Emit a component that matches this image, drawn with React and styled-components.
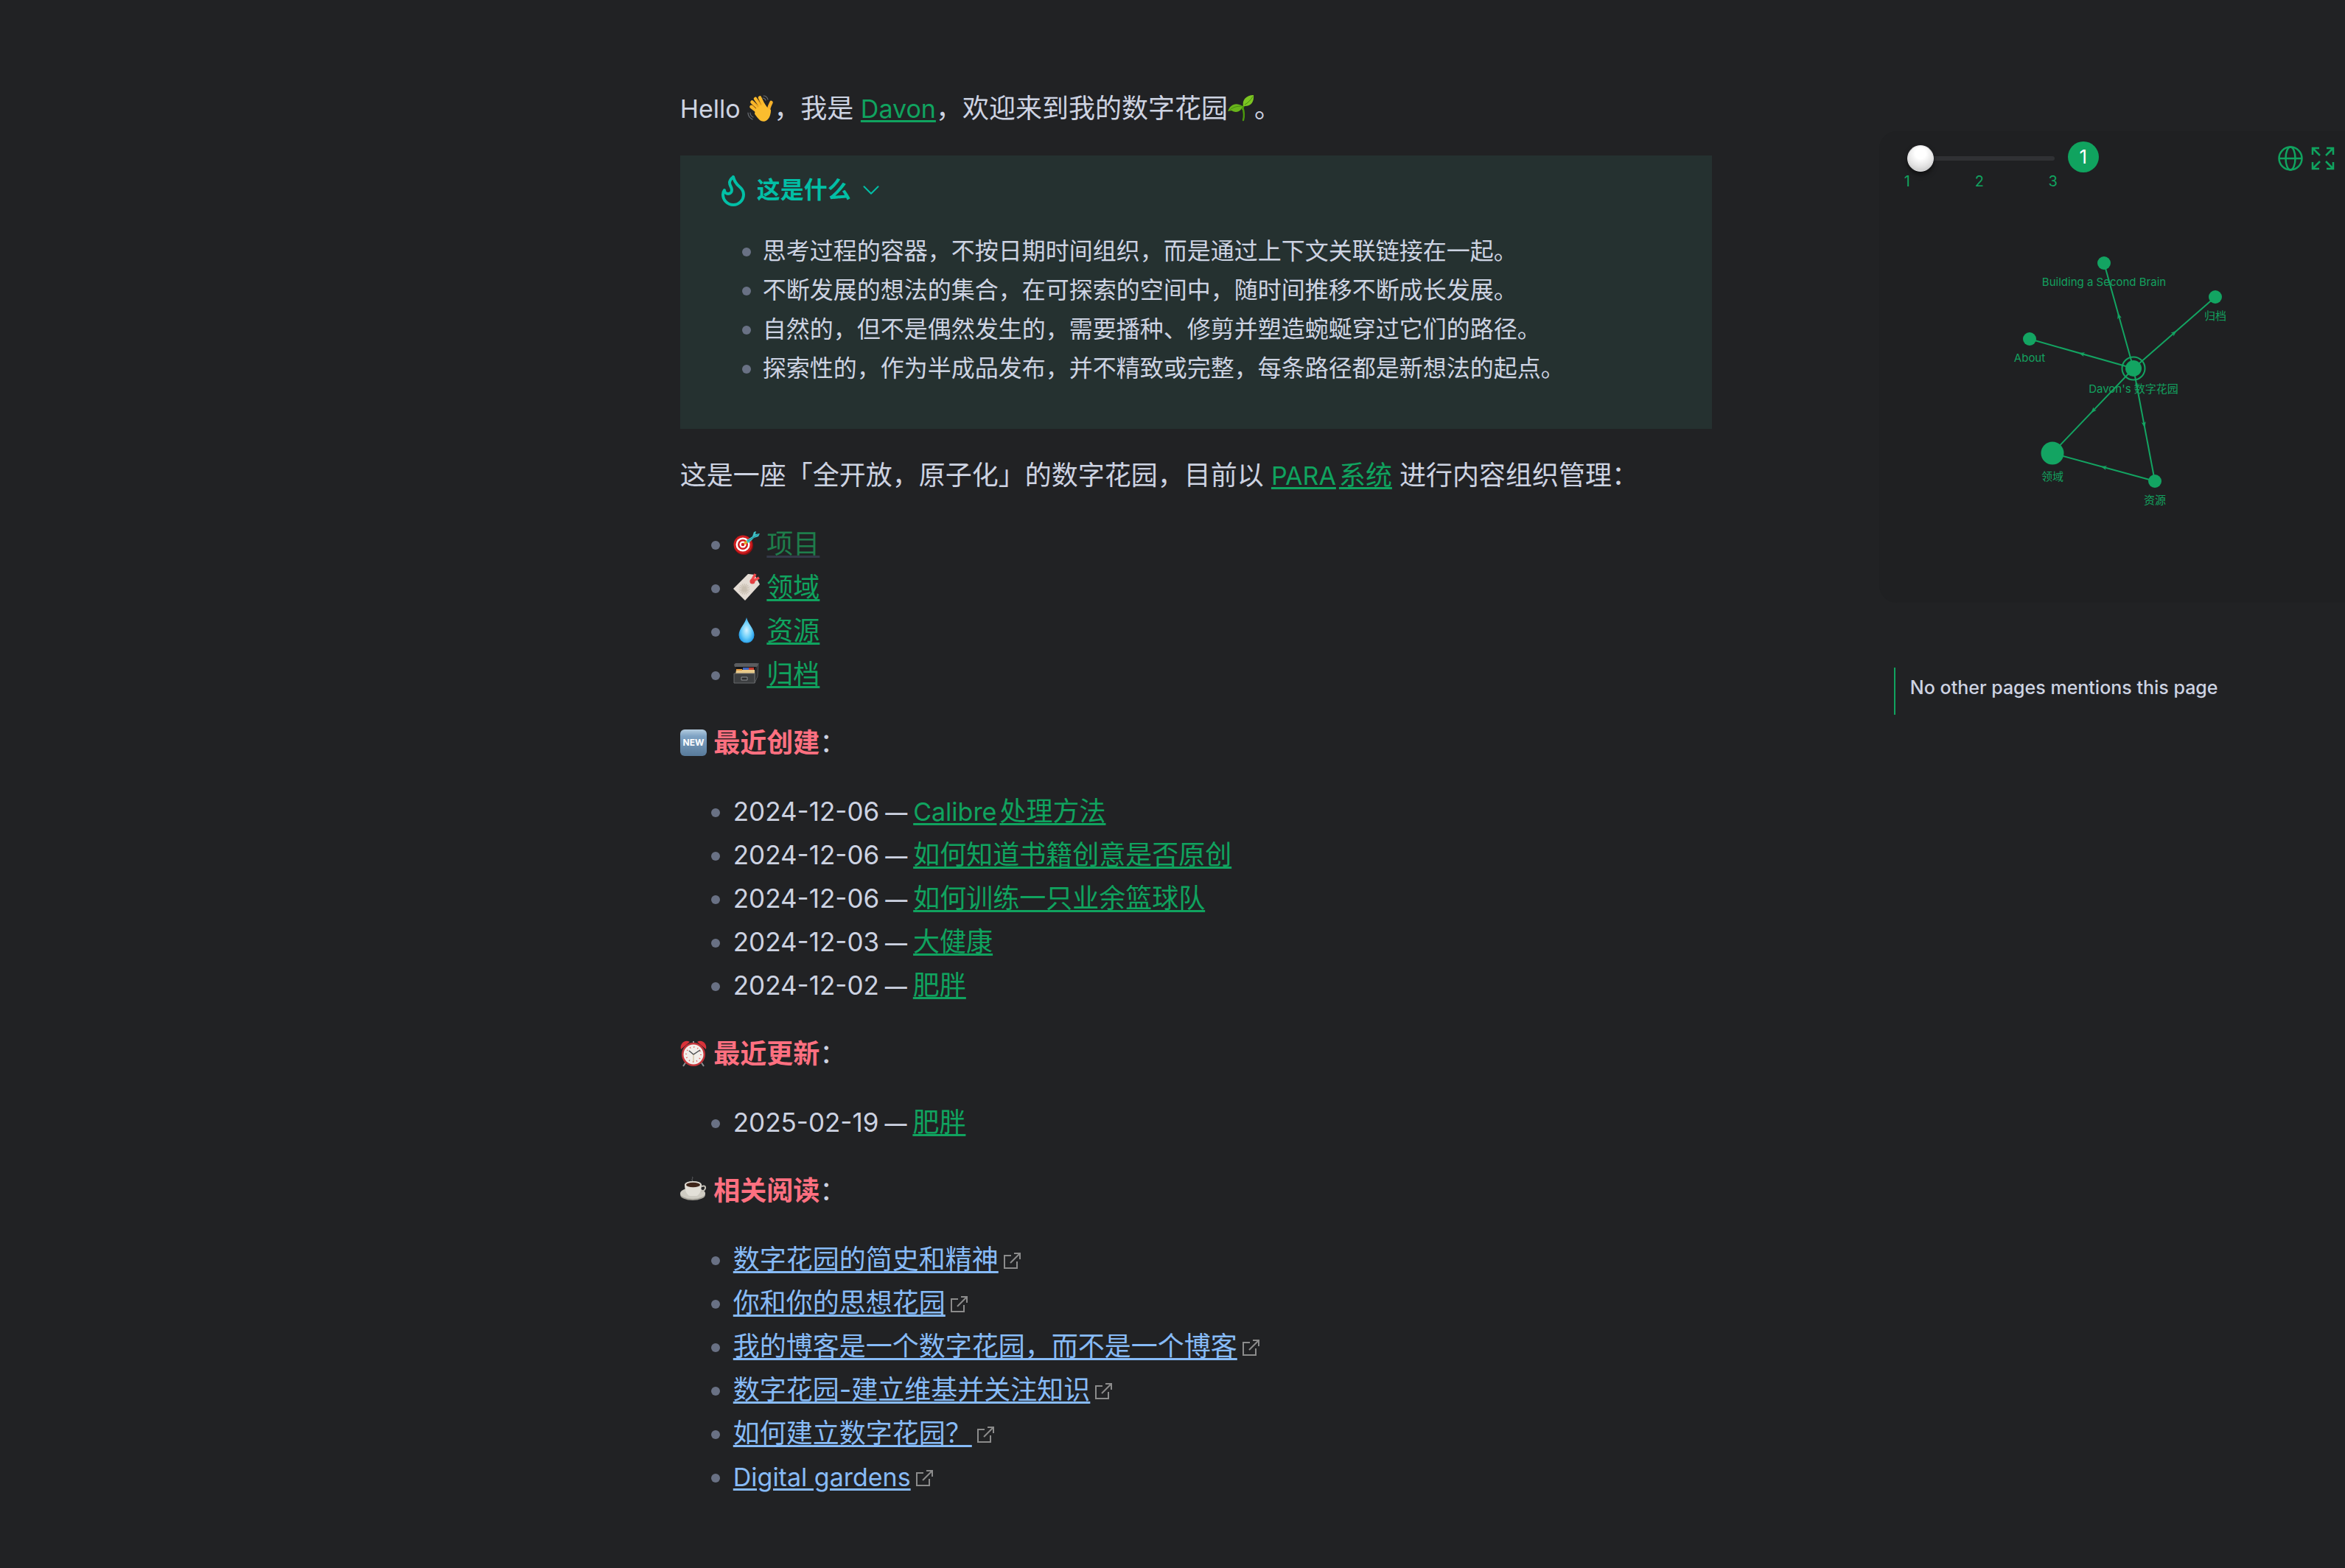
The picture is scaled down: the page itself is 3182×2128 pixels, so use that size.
import React, { useState } from 'react';
import styled, { createGlobalStyle } from 'styled-components';
import { ChevronDown, Flame } from 'lucide-react';

const GlobalStyle = createGlobalStyle`
  body {
    background: #212224;
    color: #cdd3e2;
    font-family: Inter, "Noto Sans CJK SC", sans-serif;
    margin: 0;
  }
`;

const Page = styled.div`
  display: grid;
  grid-template-columns: 29fr 44fr 27fr;
  min-height: 100vh;
  overflow: hidden;
`;

const Article = styled.main`
  display: flex;
  flex-direction: column;
  font-size: 36px;
  gap: 34px;
  grid-column: 2;
  line-height: 59px;
  min-width: 0;
  padding: 118px 0 90px;
`;

const Paragraph = styled.p`
  margin: 0;
`;

const SectionTitle = styled.strong`
  color: #ff7080;
  font-weight: 700;
`;

const Latin = styled.span`
  font-size: 34px;
  line-height: 1;
`;

const NoteDate = styled.time`
  font-size: 35px;
  line-height: 1;
`;

const Dash = styled.span`
  font-size: 30px;
  font-weight: 500;
  line-height: 1;
`;

const Link = styled.a`
  color: ${({ $external }) => ($external ? '#87bbf7' : '#10a35f')};
  text-decoration: underline;
  text-decoration-thickness: 3px;
  text-underline-offset: 3px;

  ${Latin} + span {
    margin-left: 4px;
  }
`;

const UnresolvedLink = styled(Link)`
  color: #1e7d4b;
  text-decoration-color: #343848;
`;

const BulletList = styled.ul`
  list-style: none;
  margin: 0;
  padding: 0 0 0 42px;
`;

const BulletItem = styled.li`
  align-items: center;
  display: flex;
  gap: 18px;

  &::before {
    background: #697184;
    border-radius: 50%;
    content: '';
    flex: none;
    height: 12px;
    margin-top: 2px;
    width: 12px;
  }
`;

const Callout = styled.section`
  background: #253130;
  font-size: 32px;
  line-height: 53px;
  padding: 20px 48px 56px;
`;

const CalloutTitle = styled.button`
  align-items: center;
  background: none;
  border: 0;
  color: #02bfa6;
  cursor: pointer;
  display: flex;
  font: inherit;
  font-weight: 700;
  gap: 8px;
  margin-bottom: 30px;
  padding: 0;
`;

const CalloutList = styled(BulletList)`
  padding-left: 36px;

  ${BulletItem} {
    gap: 16px;
  }
`;

const EmojiSvg = styled.svg`
  display: inline-block;
  height: 36px;
  overflow: visible;
  vertical-align: -5px;
  width: 36px;
`;

const ExternalSvg = styled.svg`
  fill: none;
  height: 22px;
  margin-left: 7px;
  stroke: #8b8b8b;
  stroke-width: 2;
  width: 23px;
`;

const Sidebar = styled.aside`
  display: flex;
  flex-direction: column;
  gap: 88px;
  grid-column: 3;
  min-width: 0;
  padding: 178px 0 0 227px;
`;

const GraphPanel = styled.section`
  background: #1f2022;
  border-radius: 24px 0 0 24px;
  height: 640px;
`;

const GraphToolbar = styled.div`
  align-items: flex-start;
  box-sizing: border-box;
  color: #10a35f;
  display: flex;
  height: 82px;
  padding: 14px 13px 0 38px;
`;

const DepthControl = styled.div`
  padding-top: 5px;
  width: 200px;
`;

const DepthSlider = styled.input`
  appearance: none;
  background: transparent;
  display: block;
  height: 36px;
  margin: 0;
  width: 100%;

  &::-webkit-slider-runnable-track {
    background: #303134;
    border-radius: 3px;
    height: 6px;
  }

  &::-webkit-slider-thumb {
    appearance: none;
    background: radial-gradient(circle at 50% 30%, #ffffff 25%, #e4e4e4 60%, #c9c9c9 85%);
    border: 1px solid #e2e2e4;
    border-radius: 50%;
    box-shadow: 0 4px 6px rgba(0, 0, 0, .5);
    box-sizing: border-box;
    height: 36px;
    margin-top: -15px;
    width: 36px;
  }
`;

const DepthMarks = styled.div`
  display: flex;
  font-size: 20px;
  justify-content: space-between;
  line-height: 26px;
  margin: 0 -4px;
`;

const DepthBadge = styled.output`
  background: #10a35f;
  border-radius: 50%;
  color: #ffffff;
  font-size: 26px;
  height: 42px;
  line-height: 42px;
  margin-left: 18px;
  text-align: center;
  width: 42px;
`;

const GraphActions = styled.div`
  display: flex;
  gap: 10px;
  margin-left: auto;
  padding-top: 6px;
`;

const IconButton = styled.button`
  background: none;
  border: 0;
  color: inherit;
  cursor: pointer;
  display: block;
  height: 34px;
  padding: 0;
  width: 34px;

  svg {
    display: block;
    fill: none;
    height: 34px;
    stroke: currentColor;
    stroke-width: 2.500;
    width: 34px;
  }
`;

const GraphSvg = styled.svg`
  display: block;
  height: 558px;
  width: 100%;

  circle, polygon {
    fill: #13a462;
  }

  line {
    stroke: #13a462;
    stroke-width: 2;
  }

  text {
    fill: #13a05f;
    font-size: 15px;
    text-anchor: middle;
  }
`;

const FocusRing = styled.circle`
  && {
    fill: none;
    stroke: #13a462;
    stroke-width: 2;
  }
`;

const Backlinks = styled.p`
  border-left: 2px solid #10a35f;
  box-sizing: border-box;
  font-size: 25px;
  font-weight: 450;
  height: 64px;
  line-height: 54px;
  margin: 0 0 0 20px;
  padding-left: 20px;
`;

const Wave = () => (
  <EmojiSvg viewBox="0 0 36 36" aria-label="wave">
    <g fill="none" strokeLinecap="round">
      <g stroke="#f9b82a" strokeWidth="4.600">
        <path d="M20 22L6.500 9.500" />
        <path d="M21 19L11 5" />
        <path d="M24 18L17 3.500" />
        <path d="M17 25L5.500 16" />
      </g>
      <path stroke="#f7b12a" strokeWidth="4.600" d="M29 23c-1-4 1-8 3.500-13" />
      <path stroke="#e08f16" strokeWidth="1" d="M9 9l9 11M14 6l8 12M7 14l9 9" />
    </g>
    <path fill="#fbbd2e" d="M11 19L23 11l5 7 4 2c0 8-3 14-8 15.500-6 1.500-10-4-14-10z" />
    <path fill="none" stroke="#666a70" strokeWidth="1.200" strokeLinecap="round" d="M1 24c0 4 2 7 6 9M4 24c0 3 2 5 4 6M22 1c3 0 5 2 6 5M21 4c2 0 3 1 4 3" />
  </EmojiSvg>
);

const Sprout = () => (
  <EmojiSvg viewBox="0 0 36 36" aria-label="seedling">
    <path fill="none" stroke="#4c9a0d" strokeWidth="2.400" strokeLinecap="round" d="M21 34c2-7 1-12-1-18M20 19c1-4 3-7 6-9" />
    <path fill="#69b51b" d="M0 22c3-9 11-13 20-7-2 8-9 10-15 6-2 0-4 1-5 1z" />
    <path fill="#7cc522" d="M35 0c1 10-4 16-14 15-2-8 4-15 14-15z" />
    <path fill="none" stroke="#438a10" d="M3 20c5-4 10-5 16-5M23 13c4-2 8-6 11-11" />
  </EmojiSvg>
);

const Target = () => (
  <EmojiSvg viewBox="0 0 36 36" aria-label="target">
    <ellipse cx="14" cy="20" rx="13" ry="13" fill="#8f0f12" />
    <circle cx="13" cy="19" r="12.500" fill="#cf1d1f" />
    <circle cx="13" cy="19" r="9.500" fill="#ffffff" />
    <circle cx="13" cy="19" r="7" fill="#cf1d1f" />
    <circle cx="13" cy="19" r="4.500" fill="#ffffff" />
    <circle cx="13" cy="19" r="2.300" fill="#cf1d1f" />
    <path stroke="#e5ad25" strokeWidth="3" d="M15 18l5-4" />
    <path fill="#3fc0c6" d="M18 13l8-5 2-6 3-1-1 4 6-1-2 4-6 2-6 6-3 1z" />
    <path stroke="#1f8f9a" d="M20 14L34 5" />
  </EmojiSvg>
);

const Tag = () => (
  <EmojiSvg viewBox="0 0 36 36" aria-label="label">
    <path fill="#e4dcd4" d="M0 20L20 0l9 1 7 13-20 22z" />
    <g stroke="#c9bfb1" strokeWidth="1.200">
      <path d="M15 13v15M7.500 20.500h15M9.700 15.200l10.600 10.600M20.300 15.200L9.700 25.800M12 13.500l6 14M18 13.500l-6 14M8 17.500l14 6M8 23.500l14-6" />
    </g>
    <path fill="none" stroke="#f04a4c" strokeWidth="3.500" d="M25 9l5-9M26 10l9-5" />
    <circle cx="26" cy="10" r="3.500" fill="#e33e40" />
  </EmojiSvg>
);

const Droplet = () => (
  <EmojiSvg viewBox="0 0 36 36" aria-label="droplet">
    <defs>
      <radialGradient id="drop" cx=".5" cy=".5" r=".6">
        <stop offset="0" stopColor="#d5f3ff" />
        <stop offset=".5" stopColor="#6fd0fa" />
        <stop offset="1" stopColor="#0f90e6" />
      </radialGradient>
    </defs>
    <path fill="url(#drop)" d="M18 0c2 9 10.500 15 10.500 24a10.500 10.500 0 0 1-21 0C7.500 15 16 9 18 0z" />
  </EmojiSvg>
);

const FileBox = () => (
  <EmojiSvg viewBox="0 0 36 36" aria-label="file box">
    <path fill="#2c2d2f" stroke="#606265" strokeWidth=".8" d="M29 12l5-9-1 18-4 9z" />
    <path fill="#5b5d60" d="M1 5l2-2h29l2 1-2 4H2z" />
    <path fill="#161617" d="M4 8h27l-2 7H3z" />
    <path fill="#3d63c0" d="M13 9h8v4h-8z" />
    <path fill="#c43a2f" d="M21 9h7v3h-7z" />
    <path fill="#e8c98a" d="M4 12h25v6H3z" />
    <path fill="#e59a3f" d="M4 11h8v2H4z" />
    <path fill="#3c3e40" stroke="#66686b" d="M1 17h28v13H1z" />
    <path fill="#2b2c2e" stroke="#8a8c8f" d="M11 22h8v4h-8z" />
  </EmojiSvg>
);

const NewBadge = () => (
  <EmojiSvg viewBox="0 0 36 36">
    <defs>
      <linearGradient id="badge" x2="0" y2="1">
        <stop offset="0" stopColor="#b5cde0" />
        <stop offset=".25" stopColor="#7fa3c4" />
        <stop offset="1" stopColor="#587a9a" />
      </linearGradient>
    </defs>
    <rect width="36" height="36" rx="6" fill="url(#badge)" />
    <text x="18" y="22" fill="#ffffff" fontSize="12" fontWeight="700" textAnchor="middle">NEW</text>
  </EmojiSvg>
);

const AlarmClock = () => (
  <EmojiSvg viewBox="0 0 36 36" aria-label="alarm clock">
    <path stroke="#8d8f92" strokeWidth="2" d="M8 29l-4 6M28 29l4 6M18 1v4" />
    <path fill="#d8323a" d="M1 12C-1 5 6-2 13 2zM35 12c2-7-5-14-12-10z" />
    <circle cx="18" cy="19" r="16" fill="#c5343a" />
    <circle cx="18" cy="19" r="13.500" fill="#f1eeea" />
    <circle cx="18" cy="19" r="10" fill="none" stroke="#e2544f" strokeWidth="2" strokeDasharray="1 4.236" />
    <path fill="none" stroke="#4d5052" strokeWidth="1.500" d="M12 14l6 5 9-6" />
    <path stroke="#c9b48c" d="M18 19v11" />
  </EmojiSvg>
);

const Coffee = () => (
  <EmojiSvg viewBox="0 0 36 36" aria-label="coffee">
    <ellipse cx="17" cy="23.500" rx="17" ry="7.500" fill="#a5a299" />
    <ellipse cx="17" cy="21.500" rx="17" ry="7.500" fill="#cfccc3" />
    <path fill="none" stroke="#c5c2b9" strokeWidth="2" d="M29 12c7-3 7 6-1 7" />
    <path fill="#e3e0d8" d="M6 9h23c0 9-3 15-7 16h-9C9 24 6 18 6 9z" />
    <ellipse cx="17.500" cy="9.500" rx="11.500" ry="4.500" fill="#dbd8d0" />
    <ellipse cx="17.500" cy="10" rx="9.500" ry="3.300" fill="#3e2418" />
    <path fill="none" stroke="#65676a" d="M17 5c-3-3 2-4-1-6" />
  </EmojiSvg>
);

const ExternalIcon = () => (
  <ExternalSvg viewBox="0 0 23 22" aria-hidden="true">
    <path d="M10 4H1v17h17v-9M14 1h8v8M22 1L9 14" />
  </ExternalSvg>
);

const GlobeIcon = () => (
  <svg viewBox="0 0 34 34" aria-hidden="true">
    <circle cx="17" cy="17" r="15.500" />
    <ellipse cx="17" cy="17" rx="6.500" ry="15.500" />
    <path d="M1.500 17h31" />
  </svg>
);

const ExpandIcon = () => (
  <svg viewBox="0 0 34 34" aria-hidden="true">
    <path d="M3 12V3h9M3 3l10 10M22 3h9v9M31 3L21 13M3 22v9h9M3 31l10-10M31 22v9h-9M31 31L21 21" />
  </svg>
);

const calloutItems = [
  '思考过程的容器，不按日期时间组织，而是通过上下文关联链接在一起。',
  '不断发展的想法的集合，在可探索的空间中，随时间推移不断成长发展。',
  '自然的，但不是偶然发生的，需要播种、修剪并塑造蜿蜒穿过它们的路径。',
  '探索性的，作为半成品发布，并不精致或完整，每条路径都是新想法的起点。',
];

const categories = [
  { icon: <Target />, name: '项目', unresolved: true },
  { icon: <Tag />, name: '领域' },
  { icon: <Droplet />, name: '资源' },
  { icon: <FileBox />, name: '归档' },
];

const created = [
  { date: '2024-12-06', latin: 'Calibre', title: '处理方法' },
  { date: '2024-12-06', title: '如何知道书籍创意是否原创' },
  { date: '2024-12-06', title: '如何训练一只业余篮球队' },
  { date: '2024-12-03', title: '大健康' },
  { date: '2024-12-02', title: '肥胖' },
];

const updated = [{ date: '2025-02-19', title: '肥胖' }];

const readings = [
  { title: '数字花园的简史和精神' },
  { title: '你和你的思想花园' },
  { title: '我的博客是一个数字花园，而不是一个博客' },
  { title: '数字花园-建立维基并关注知识' },
  { title: '如何建立数字花园？' },
  { latin: 'Digital gardens' },
];

const nodes = {
  home: { x: 345, y: 240, r: 11, label: "Davon's 数字花园", dy: 33 },
  brain: { x: 305, y: 97, r: 9, label: 'Building a Second Brain', dy: 31 },
  archive: { x: 456, y: 143, r: 9, label: '归档', dy: 31 },
  about: { x: 204, y: 200, r: 9, label: 'About', dy: 31 },
  areas: { x: 235, y: 355, r: 15.5, label: '领域', dy: 37 },
  resources: { x: 374, y: 393, r: 9, label: '资源', dy: 31 },
};

const edges = [
  ['home', 'brain'],
  ['home', 'archive'],
  ['home', 'about'],
  ['home', 'areas'],
  ['home', 'resources'],
  ['resources', 'areas'],
];

const Edge = ({ from, to }) => {
  const angle = Math.atan2(to.y - from.y, to.x - from.x) * 180 / Math.PI;
  return (
    <g>
      <line x1={from.x} y1={from.y} x2={to.x} y2={to.y} />
      <polygon
        points="4,0 -4,3 -2,0 -4,-3"
        transform={`translate(${(from.x + to.x) / 2} ${(from.y + to.y) / 2}) rotate(${angle})`}
      />
    </g>
  );
};

const Graph = () => (
  <GraphSvg viewBox="0 0 632 558" preserveAspectRatio="xMinYMin meet">
    {Object.values(nodes).map(node => (
      <text key={node.label} x={node.x} y={node.y + node.dy}>{node.label}</text>
    ))}
    {edges.map(([from, to]) => (
      <Edge key={`${from}-${to}`} from={nodes[from]} to={nodes[to]} />
    ))}
    <FocusRing cx={nodes.home.x} cy={nodes.home.y} r="15.500" />
    {Object.values(nodes).map(node => (
      <circle key={node.label} cx={node.x} cy={node.y} r={node.r} />
    ))}
  </GraphSvg>
);

const LinkTitle = ({ latin, title }) => (
  <>
    {latin && <Latin>{latin}</Latin>}
    {title && <span>{title}</span>}
  </>
);

const NoteList = ({ notes }) => (
  <BulletList>
    {notes.map(({ date, latin, title }) => (
      <BulletItem key={date + title}>
        <span>
          <NoteDate>{date}</NoteDate>
          <Dash> — </Dash>
          <Link href="#note"><LinkTitle latin={latin} title={title} /></Link>
        </span>
      </BulletItem>
    ))}
  </BulletList>
);

const App = () => {
  const [depth, setDepth] = useState(1);
  const [open, setOpen] = useState(true);

  return (
    <Page>
      <GlobalStyle />
      <Article>
        <Paragraph>
          <Latin>Hello </Latin><Wave />，我是<Latin> <Link href="#davon">Davon</Link></Latin>，欢迎来到我的数字花园<Sprout />。
        </Paragraph>

        <Callout>
          <CalloutTitle type="button" aria-expanded={open} onClick={() => setOpen(!open)}>
            <Flame size={48} />
            这是什么
            <ChevronDown size={38} strokeWidth={1.3} />
          </CalloutTitle>
          {open && (
            <CalloutList>
              {calloutItems.map(item => (
                <BulletItem key={item}><span>{item}</span></BulletItem>
              ))}
            </CalloutList>
          )}
        </Callout>

        <Paragraph>
          这是一座「全开放，原子化」的数字花园，目前以 <Link href="#para"><LinkTitle latin="PARA" title="系统" /></Link> 进行内容组织管理：
        </Paragraph>
        <BulletList>
          {categories.map(({ icon, name, unresolved }) => (
            <BulletItem key={name}>
              <span>
                {icon}<Latin> </Latin>
                {unresolved
                  ? <UnresolvedLink href="#new">{name}</UnresolvedLink>
                  : <Link href="#category">{name}</Link>}
              </span>
            </BulletItem>
          ))}
        </BulletList>

        <Paragraph><NewBadge /><Latin> </Latin><SectionTitle>最近创建</SectionTitle>：</Paragraph>
        <NoteList notes={created} />

        <Paragraph><AlarmClock /><Latin> </Latin><SectionTitle>最近更新</SectionTitle>：</Paragraph>
        <NoteList notes={updated} />

        <Paragraph><Coffee /><Latin> </Latin><SectionTitle>相关阅读</SectionTitle>：</Paragraph>
        <BulletList>
          {readings.map(({ latin, title }) => (
            <BulletItem key={latin || title}>
              <span>
                <Link $external href="#reading"><LinkTitle latin={latin} title={title} /></Link>
                <ExternalIcon />
              </span>
            </BulletItem>
          ))}
        </BulletList>
      </Article>

      <Sidebar>
        <GraphPanel>
          <GraphToolbar>
            <DepthControl>
              <DepthSlider
                type="range"
                min="1"
                max="3"
                value={depth}
                aria-label="Depth"
                onChange={event => setDepth(Number(event.target.value))}
              />
              <DepthMarks>
                <span>1</span>
                <span>2</span>
                <span>3</span>
              </DepthMarks>
            </DepthControl>
            <DepthBadge>{depth}</DepthBadge>
            <GraphActions>
              <IconButton type="button" aria-label="Global graph"><GlobeIcon /></IconButton>
              <IconButton type="button" aria-label="Expand graph"><ExpandIcon /></IconButton>
            </GraphActions>
          </GraphToolbar>
          <Graph />
        </GraphPanel>
        <Backlinks>No other pages mentions this page</Backlinks>
      </Sidebar>
    </Page>
  );
};

export default App;
